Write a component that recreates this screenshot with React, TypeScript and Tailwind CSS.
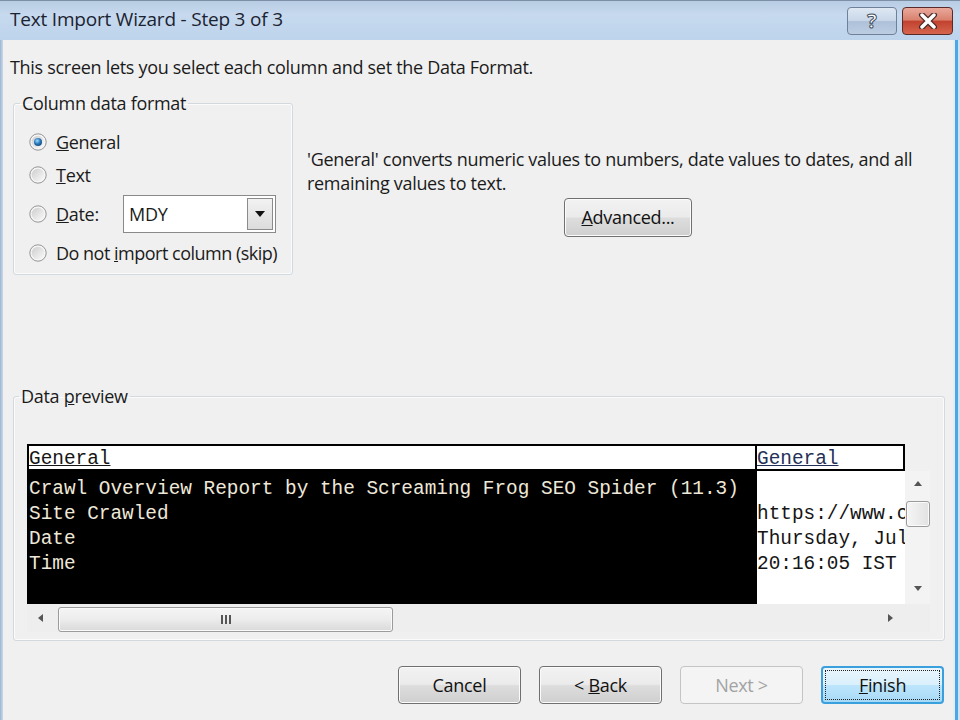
import React from "react";
import clsx from "clsx";

const mono = "font-['Liberation_Mono','Courier_New',monospace] text-[19.4px] leading-[25px]";

function Radio({ checked }: { checked?: boolean }) {
  return (
    <svg width="18" height="18" viewBox="0 0 18 18" className="shrink-0">
      <defs>
        <linearGradient id="radioFace" x1="0" y1="0" x2="1" y2="1">
          <stop offset="0" stopColor="#cdcdcd" />
          <stop offset="1" stopColor="#fafafa" />
        </linearGradient>
        <radialGradient id="radioDot" cx="0.4" cy="0.35" r="0.7">
          <stop offset="0" stopColor="#9fdcff" />
          <stop offset="0.55" stopColor="#2a78b8" />
          <stop offset="1" stopColor="#0f4a80" />
        </radialGradient>
      </defs>
      <circle cx="9" cy="9" r="8.2" fill="#f6f6f6" stroke="#959595" strokeWidth="1" />
      <circle cx="9" cy="9" r="6.3" fill="url(#radioFace)" />
      {checked && <circle cx="9" cy="9" r="4" fill="url(#radioDot)" />}
    </svg>
  );
}

function Btn({
  children,
  className,
  disabled,
  focused,
}: {
  children: React.ReactNode;
  className?: string;
  disabled?: boolean;
  focused?: boolean;
}) {
  return (
    <div
      className={clsx(
        "flex h-[38px] items-center justify-center rounded-[4px] border",
        disabled
          ? "border-[#c4c4c4] bg-[#f4f4f4] text-[#a3a3a3]"
          : focused
            ? "border-2 border-[#3aa0dd] bg-[linear-gradient(to_bottom,#eaf6fd_0%,#d9f0fc_50%,#bee6fd_50%,#a7d9f5_100%)] p-[2px] text-[#111]"
            : "border-[#707070] bg-[linear-gradient(to_bottom,#f2f2f2_0%,#ebebeb_48%,#dddddd_52%,#cfcfcf_100%)] text-[#111] shadow-[inset_0_0_0_1px_#fbfbfb]",
        className,
      )}
    >
      {focused ? (
        <div className="flex h-full w-full items-center justify-center border border-dotted border-[#222]">
          {children}
        </div>
      ) : (
        children
      )}
    </div>
  );
}

function Arrow({ dir }: { dir: "up" | "down" | "left" | "right" }) {
  const pts = {
    up: "1,7 5,2 9,7",
    down: "1,2 5,7 9,2",
    left: "7,1 2,5 7,9",
    right: "3,1 8,5 3,9",
  }[dir];
  return (
    <svg width="10" height="10" viewBox="0 0 10 10">
      <polygon points={pts} fill="#555" />
    </svg>
  );
}

function Thumb({ vertical, className }: { vertical?: boolean; className?: string }) {
  return (
    <div
      className={clsx(
        "flex items-center justify-center rounded-[3px] border border-[#9b9b9b] shadow-[inset_0_0_0_1px_#fafafa]",
        vertical
          ? "bg-[linear-gradient(to_right,#f5f5f5,#e2e2e2)]"
          : "bg-[linear-gradient(to_bottom,#f5f5f5_0%,#ececec_50%,#d9d9d9_100%)]",
        className,
      )}
    >
      {!vertical && (
        <div className="flex gap-[2px]">
          <span className="h-[9px] w-[2px] bg-[#555]" />
          <span className="h-[9px] w-[2px] bg-[#555]" />
          <span className="h-[9px] w-[2px] bg-[#555]" />
        </div>
      )}
    </div>
  );
}

export default function App() {
  return (
    <div className="flex h-[720px] w-[960px] flex-col overflow-hidden font-['Open_Sans',sans-serif] text-[#1b1b1b]">
      {/* title bar */}
      <div className="flex h-[40px] shrink-0 border-t border-[#7d8fa5] bg-[linear-gradient(to_bottom,#b8cce3_0%,#c6d9ee_35%,#bdd4ec_100%)]">
        <div className="pl-[10px] pt-[4px] text-[19px] leading-[28px] tracking-[-0.2px] text-[#1c2330]">
          Text Import Wizard - Step 3 of 3
        </div>
        <div className="ml-auto mr-[7px] mt-[6px] flex gap-[5px]">
          <div className="flex h-[28px] w-[50px] items-center justify-center rounded-[4px] border border-[#6f8199] bg-[linear-gradient(to_bottom,#dfe8f3_0%,#c7d6e8_50%,#adc1da_52%,#bccde2_100%)]">
            <span className="text-[20px] font-bold leading-none text-white [-webkit-text-stroke:1px_#3f4b5c]">?</span>
          </div>
          <div className="flex h-[28px] w-[51px] items-center justify-center rounded-[4px] border border-[#5a2a2a] bg-[linear-gradient(to_bottom,#e9a99b_0%,#d9826f_45%,#c2432f_52%,#d6654d_100%)]">
            <svg width="20" height="16" viewBox="0 0 20 16">
              <path d="M4 2 L16 14 M16 2 L4 14" stroke="#4a2a2a" strokeWidth="6" strokeLinecap="round" />
              <path d="M4 2 L16 14 M16 2 L4 14" stroke="#ffffff" strokeWidth="3.5" strokeLinecap="round" />
            </svg>
          </div>
        </div>
      </div>

      {/* body */}
      <div className="flex flex-1 bg-[#f0f0f0]">
        <div className="w-[3px] bg-[linear-gradient(to_right,#9fb5cf,#c8daee)]" />
        <div className="flex flex-1 flex-col text-[18px] tracking-[-0.3px]">
          <p className="ml-[7px] mt-[15px] leading-[24px]">
            This screen lets you select each column and set the Data Format.
          </p>

          <div className="mt-[13px] flex">
            <fieldset className="ml-[10px] w-[280px] rounded-[3px] border border-[#d2dadf] p-0 shadow-[inset_0_0_0_1px_#fbfbfb]">
              <legend className="ml-[6px] px-[2px] leading-[22px]">Column data format</legend>
              <div className="flex flex-col pb-[9px] pl-[15px]">
                <div className="mt-[16px] flex h-[24px] items-center gap-[9px]">
                  <Radio checked />
                  <span>
                    <u>G</u>eneral
                  </span>
                </div>
                <div className="mt-[9px] flex h-[24px] items-center gap-[9px]">
                  <Radio />
                  <span>
                    <u>T</u>ext
                  </span>
                </div>
                <div className="mt-[8px] flex h-[38px] items-center">
                  <Radio />
                  <span className="ml-[9px] w-[67px]">
                    <u>D</u>ate:
                  </span>
                  <div className="flex h-[38px] w-[153px] items-stretch border border-[#8a8a8a] bg-white p-[2px]">
                    <span className="flex flex-1 items-center pl-[3px]">MDY</span>
                    <div className="flex w-[26px] items-center justify-center border border-[#8b8b8b] bg-[linear-gradient(to_bottom,#f2f2f2,#dcdcdc)]">
                      <svg width="12" height="8" viewBox="0 0 12 8">
                        <polygon points="1,1 11,1 6,7" fill="#111" />
                      </svg>
                    </div>
                  </div>
                </div>
                <div className="mt-[8px] flex h-[24px] items-center gap-[9px]">
                  <Radio />
                  <span className="tracking-[-0.5px]">
                    Do not <u>i</u>mport column (skip)
                  </span>
                </div>
              </div>
            </fieldset>

            <div className="ml-[14px] flex flex-col pt-[55px]">
              <p className="whitespace-nowrap leading-[24px]">
                'General' converts numeric values to numbers, date values to dates, and all
                <br />
                remaining values to text.
              </p>
              <Btn className="ml-[257px] mt-[3px] h-[39px] w-[128px]">
                <span>
                  <u>A</u>dvanced...
                </span>
              </Btn>
            </div>
          </div>

          <fieldset className="ml-[10px] mt-[110px] w-[932px] rounded-[3px] border border-[#d2dadf] p-0 shadow-[inset_0_0_0_1px_#fbfbfb]">
            <legend className="ml-[5px] px-[2px] leading-[22px]">
              Data <u>p</u>review
            </legend>
            <div className="mb-[8px] ml-[13px] mt-[37px] flex w-[903px] flex-col tracking-normal">
              {/* header */}
              <div className={clsx("flex h-[27px] w-[878px] border-2 border-black bg-white", mono)}>
                <div className="h-full w-[726px] overflow-hidden pt-[2px] leading-[22px] text-[#161616]">
                  <u className="decoration-1">General</u>
                </div>
                <div className="h-full flex-1 overflow-hidden border-l-2 border-black pt-[2px] leading-[22px] text-[#243156]">
                  <u className="decoration-1">General</u>
                </div>
              </div>
              {/* rows */}
              <div className="flex h-[133px]">
                <div className={clsx("flex w-[878px]", mono)}>
                  <div className="w-[730px] whitespace-pre bg-black pl-[2px] pt-[6px] text-[#eee8d8]">
                    <div>Crawl Overview Report by the Screaming Frog SEO Spider (11.3)</div>
                    <div>Site Crawled</div>
                    <div>Date</div>
                    <div>Time</div>
                  </div>
                  <div className="flex-1 overflow-hidden whitespace-pre bg-white pt-[6px] text-[#151515]">
                    <div>&nbsp;</div>
                    <div>https://www.c</div>
                    <div>Thursday, Jul</div>
                    <div>20:16:05 IST</div>
                  </div>
                </div>
                <div className="flex w-[25px] flex-col items-center bg-[#f3f3f3]">
                  <div className="flex h-[26px] items-center">
                    <Arrow dir="up" />
                  </div>
                  <Thumb vertical className="mt-[4px] h-[26px] w-[24px]" />
                  <div className="mt-auto flex h-[30px] items-center">
                    <Arrow dir="down" />
                  </div>
                </div>
              </div>
              {/* horizontal scrollbar */}
              <div className="flex h-[28px]">
                <div className="flex w-[878px] items-center bg-[#eeeeee]">
                  <div className="flex w-[28px] justify-center">
                    <Arrow dir="left" />
                  </div>
                  <Thumb className="ml-[3px] mt-[3px] h-[25px] w-[335px]" />
                  <div className="ml-auto flex w-[30px] justify-center">
                    <Arrow dir="right" />
                  </div>
                </div>
                <div className="w-[25px] bg-[#eeeeee]" />
              </div>
            </div>
          </fieldset>

          <div className="mt-[25px] flex justify-end gap-[18px] pr-[9px]">
            <Btn className="w-[123px]">Cancel</Btn>
            <Btn className="w-[123px]">
              <span>
                &lt; <u>B</u>ack
              </span>
            </Btn>
            <Btn className="w-[123px]" disabled>
              Next &gt;
            </Btn>
            <Btn className="w-[123px]" focused>
              <span>
                <u>F</u>inish
              </span>
            </Btn>
          </div>
        </div>
        <div className="w-[7px] bg-[linear-gradient(to_right,#e4edf6_0,#e4edf6_2px,#4aa8e2_2px,#4aa8e2_5px,#cfe2f3_5px)]" />
      </div>
    </div>
  );
}
